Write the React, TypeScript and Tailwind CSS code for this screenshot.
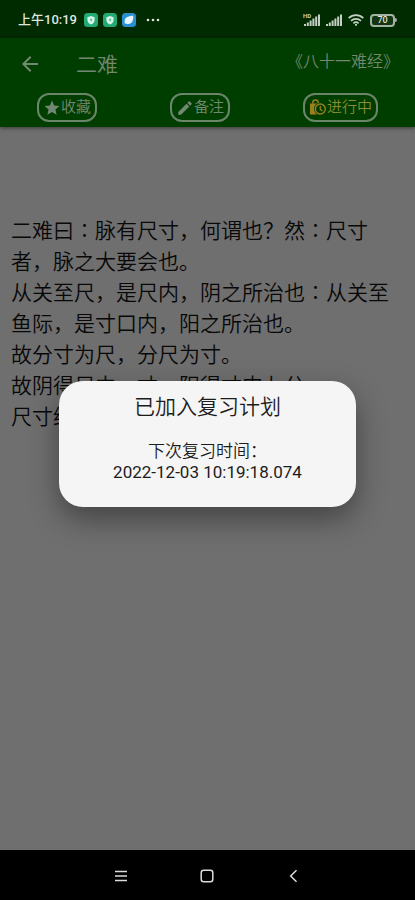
const lines = [
  "二难曰∶脉有尺寸，何谓也？然∶尺寸者，脉之大要会也。",
  "从关至尺，是尺内，阴之所治也∶从关至鱼际，是寸口内，阳之所治也。",
  "故分寸为尺，分尺为寸。",
  "故阴得尺中一寸，阳得寸内九分。",
  "尺寸终始一寸九分，故曰尺寸也。"
];

function ShieldBadge() {
  return (
    <svg className="size-3.5" viewBox="0 0 14 14" aria-hidden="true">
      <rect width="14" height="14" rx="3.5" fill="#22ab74" />
      <path d="M7 3 10.6 4.2v2.600c0 2.400-1.400 3.800-3.600 4.600-2.200-.8-3.600-2.200-3.600-4.600V4.200z" fill="#dcf5ea" />
      <path d="M7.400 4.800 5.800 7.200h1.200l-.3 1.800 1.700-2.500H7.200z" fill="#22ab74" />
    </svg>
  );
}

function BirdBadge() {
  return (
    <svg className="size-3.5" viewBox="0 0 14 14" aria-hidden="true">
      <rect width="14" height="14" rx="3.5" fill="#2a8fd0" />
      <path d="M2.6 8.400C2.600 5 5.600 2.800 11.200 2.800c.5 4.600-1.200 8-4.700 8.300-1 .1-1.900-.1-2.500-.6l-1.200.2z" fill="#e6f5ff" />
    </svg>
  );
}

function SignalBars() {
  return (
    <svg className="h-3 w-4" viewBox="0 0 16 12" fill="#c4d0c4" aria-hidden="true">
      <rect x="0" y="10" width="2" height="2" />
      <rect x="2.8" y="8.5" width="2" height="3.5" />
      <rect x="5.6" y="6.5" width="2" height="5.5" />
      <rect x="8.4" y="4.5" width="2" height="7.5" />
      <rect x="11.2" y="2.5" width="2" height="9.5" />
      <rect x="14" y="0.5" width="2" height="11.5" />
    </svg>
  );
}

function StatusBar() {
  return (
    <div className="flex h-[38px] items-center justify-between bg-[#002b00] px-[18px] pt-0.5 text-[#dfe6df]">
      <div className="flex items-center gap-[5px]">
        <span className="mr-0.5 text-[13px] font-medium">上午10:19</span>
        <ShieldBadge />
        <ShieldBadge />
        <BirdBadge />
        <svg className="ml-1 h-1 w-4" viewBox="0 0 16 4" fill="#dfe6df" aria-hidden="true">
          <circle cx="3" cy="2" r="1.3" />
          <circle cx="8" cy="2" r="1.3" />
          <circle cx="13" cy="2" r="1.3" />
        </svg>
      </div>
      <div className="flex items-center gap-[6px]">
        <div className="relative">
          <span className="absolute -top-px -left-px text-[6px] leading-none font-bold text-[#c4d0c4]">HD</span>
          <SignalBars />
        </div>
        <SignalBars />
        <svg className="h-3 w-4" viewBox="0 0 16 12" fill="none" stroke="#c4d0c4" strokeWidth="1.7" aria-hidden="true">
          <path d="M.7 4.2a10.4 10.4 0 0 1 14.6 0M3 6.900a7.200 7.200 0 0 1 10 0M5.400 9.300a3.800 3.800 0 0 1 5.200 0" />
          <circle cx="8" cy="10.8" r="1.1" fill="#c4d0c4" stroke="none" />
        </svg>
        <div className="flex items-center">
          <span className="flex h-[13px] w-[25px] items-center justify-center rounded-[4px] border-2 border-[#a3b3a3] bg-[#143514] text-[9px] leading-none font-medium">
            70
          </span>
          <span className="h-1 w-0.5 rounded-r-sm bg-[#a3b3a3]" />
        </div>
      </div>
    </div>
  );
}

function AppBar() {
  const action =
    "flex h-[29px] items-center rounded-xl border-2 border-[#6b856b] px-1 text-[15px] leading-none";

  return (
    <header className="relative bg-[#003e00] font-[350] text-[#728872] shadow-[0_1px_4px_rgba(0,0,0,0.5)]">
      <div className="flex h-[55px] items-center pr-4 pl-[18px]">
        <button type="button" aria-label="返回" className="mb-1">
          <svg className="size-6" viewBox="0 0 24 24" fill="currentColor">
            <path d="M20 11H7.830l5.590-5.590L12 4l-8 8 8 8 1.410-1.410L7.830 13H20z" />
          </svg>
        </button>
        <h1 className="ml-[34px] flex-1 text-[21px] leading-none">二难</h1>
        <span className="mb-2 text-base leading-none">《八十一难经》</span>
      </div>
      <div className="flex justify-between px-[37px] pb-[5px]">
        <button type="button" className={action}>
          <svg className="size-[18px]" viewBox="0 0 24 24" fill="currentColor" aria-hidden="true">
            <path d="M12 17.270 18.180 21l-1.640-7.030L22 9.240l-7.190-.61L12 2 9.190 8.630 2 9.240l5.460 4.730L5.820 21z" />
          </svg>
          收藏
        </button>
        <button type="button" className={action}>
          <svg className="size-[18px]" viewBox="0 0 24 24" fill="currentColor" aria-hidden="true">
            <path d="M3 17.250V21h3.750L17.810 9.940l-3.750-3.750zM20.710 7.040a1 1 0 0 0 0-1.410l-2.340-2.340a1 1 0 0 0-1.410 0l-1.830 1.830 3.750 3.750z" />
          </svg>
          备注
        </button>
        <button type="button" className={action}>
          <svg className="size-[18px]" viewBox="0 0 18 18" fill="none" stroke="#9a7f1c" aria-hidden="true">
            <path d="M1 4.500h11v11H1z" fill="#9a7f1c" stroke="none" />
            <path d="M3.800 4.800V3.600a2.700 2.700 0 0 1 5.400 0v1.200" strokeWidth="1.500" />
            <circle cx="11.300" cy="10" r="6.300" fill="#003e00" stroke="none" />
            <circle cx="11.300" cy="10" r="5" strokeWidth="1.400" />
            <path d="M11.300 7v3.200l2 1.800" strokeWidth="1.300" />
          </svg>
          <span className="text-[#8a8a2e]">进行中</span>
        </button>
      </div>
    </header>
  );
}

function NavBar() {
  return (
    <nav className="flex h-[50px] items-center justify-center gap-[70px] bg-black pt-0.5 pr-0.5 text-[#dcdcdc]">
      <button type="button" aria-label="菜单">
        <svg className="size-4" viewBox="0 0 16 16" stroke="currentColor" strokeWidth="1.5">
          <path d="M2 3.500h12M2 8h12M2 12.500h12" />
        </svg>
      </button>
      <button type="button" aria-label="主页">
        <svg className="size-4" viewBox="0 0 16 16" fill="none" stroke="currentColor" strokeWidth="1.500">
          <rect x="2.200" y="2.200" width="11.600" height="11.600" rx="2.500" />
        </svg>
      </button>
      <button type="button" aria-label="后退">
        <svg className="size-4" viewBox="0 0 16 16" fill="none" stroke="currentColor" strokeWidth="1.500">
          <path d="M11.500 2.200 5.700 8l5.800 5.800" />
        </svg>
      </button>
    </nav>
  );
}

export default function App() {
  return (
    <div
      lang="zh-CN"
      className="relative flex min-h-screen flex-col bg-[#6f6f6f] font-[Roboto,'Noto_Sans_CJK_SC',sans-serif]"
    >
      <StatusBar />
      <AppBar />
      <main className="flex-1 px-[11px] pt-[89px] text-[21px] leading-[31px] font-[350] text-[#080808]">
        {lines.map((line) => (
          <p key={line}>{line}</p>
        ))}
      </main>
      <NavBar />
      <div className="absolute inset-x-0 top-[38px] bottom-[50px] flex items-center justify-center px-[59px]">
        <div
          role="dialog"
          aria-labelledby="plan-title"
          className="w-full rounded-3xl bg-[#f5f5f5] px-4 pt-3 pb-6 text-center text-[#1c1c1c] shadow-[0_12px_30px_rgba(0,0,0,0.4)]"
        >
          <h2 id="plan-title" className="text-[21px] leading-7 font-[350]">
            已加入复习计划
          </h2>
          <div className="mt-5 text-[17px] leading-[21px]">
            <p className="font-[350]">下次复习时间：</p>
            <p>2022-12-03 10:19:18.074</p>
          </div>
        </div>
      </div>
    </div>
  );
}
